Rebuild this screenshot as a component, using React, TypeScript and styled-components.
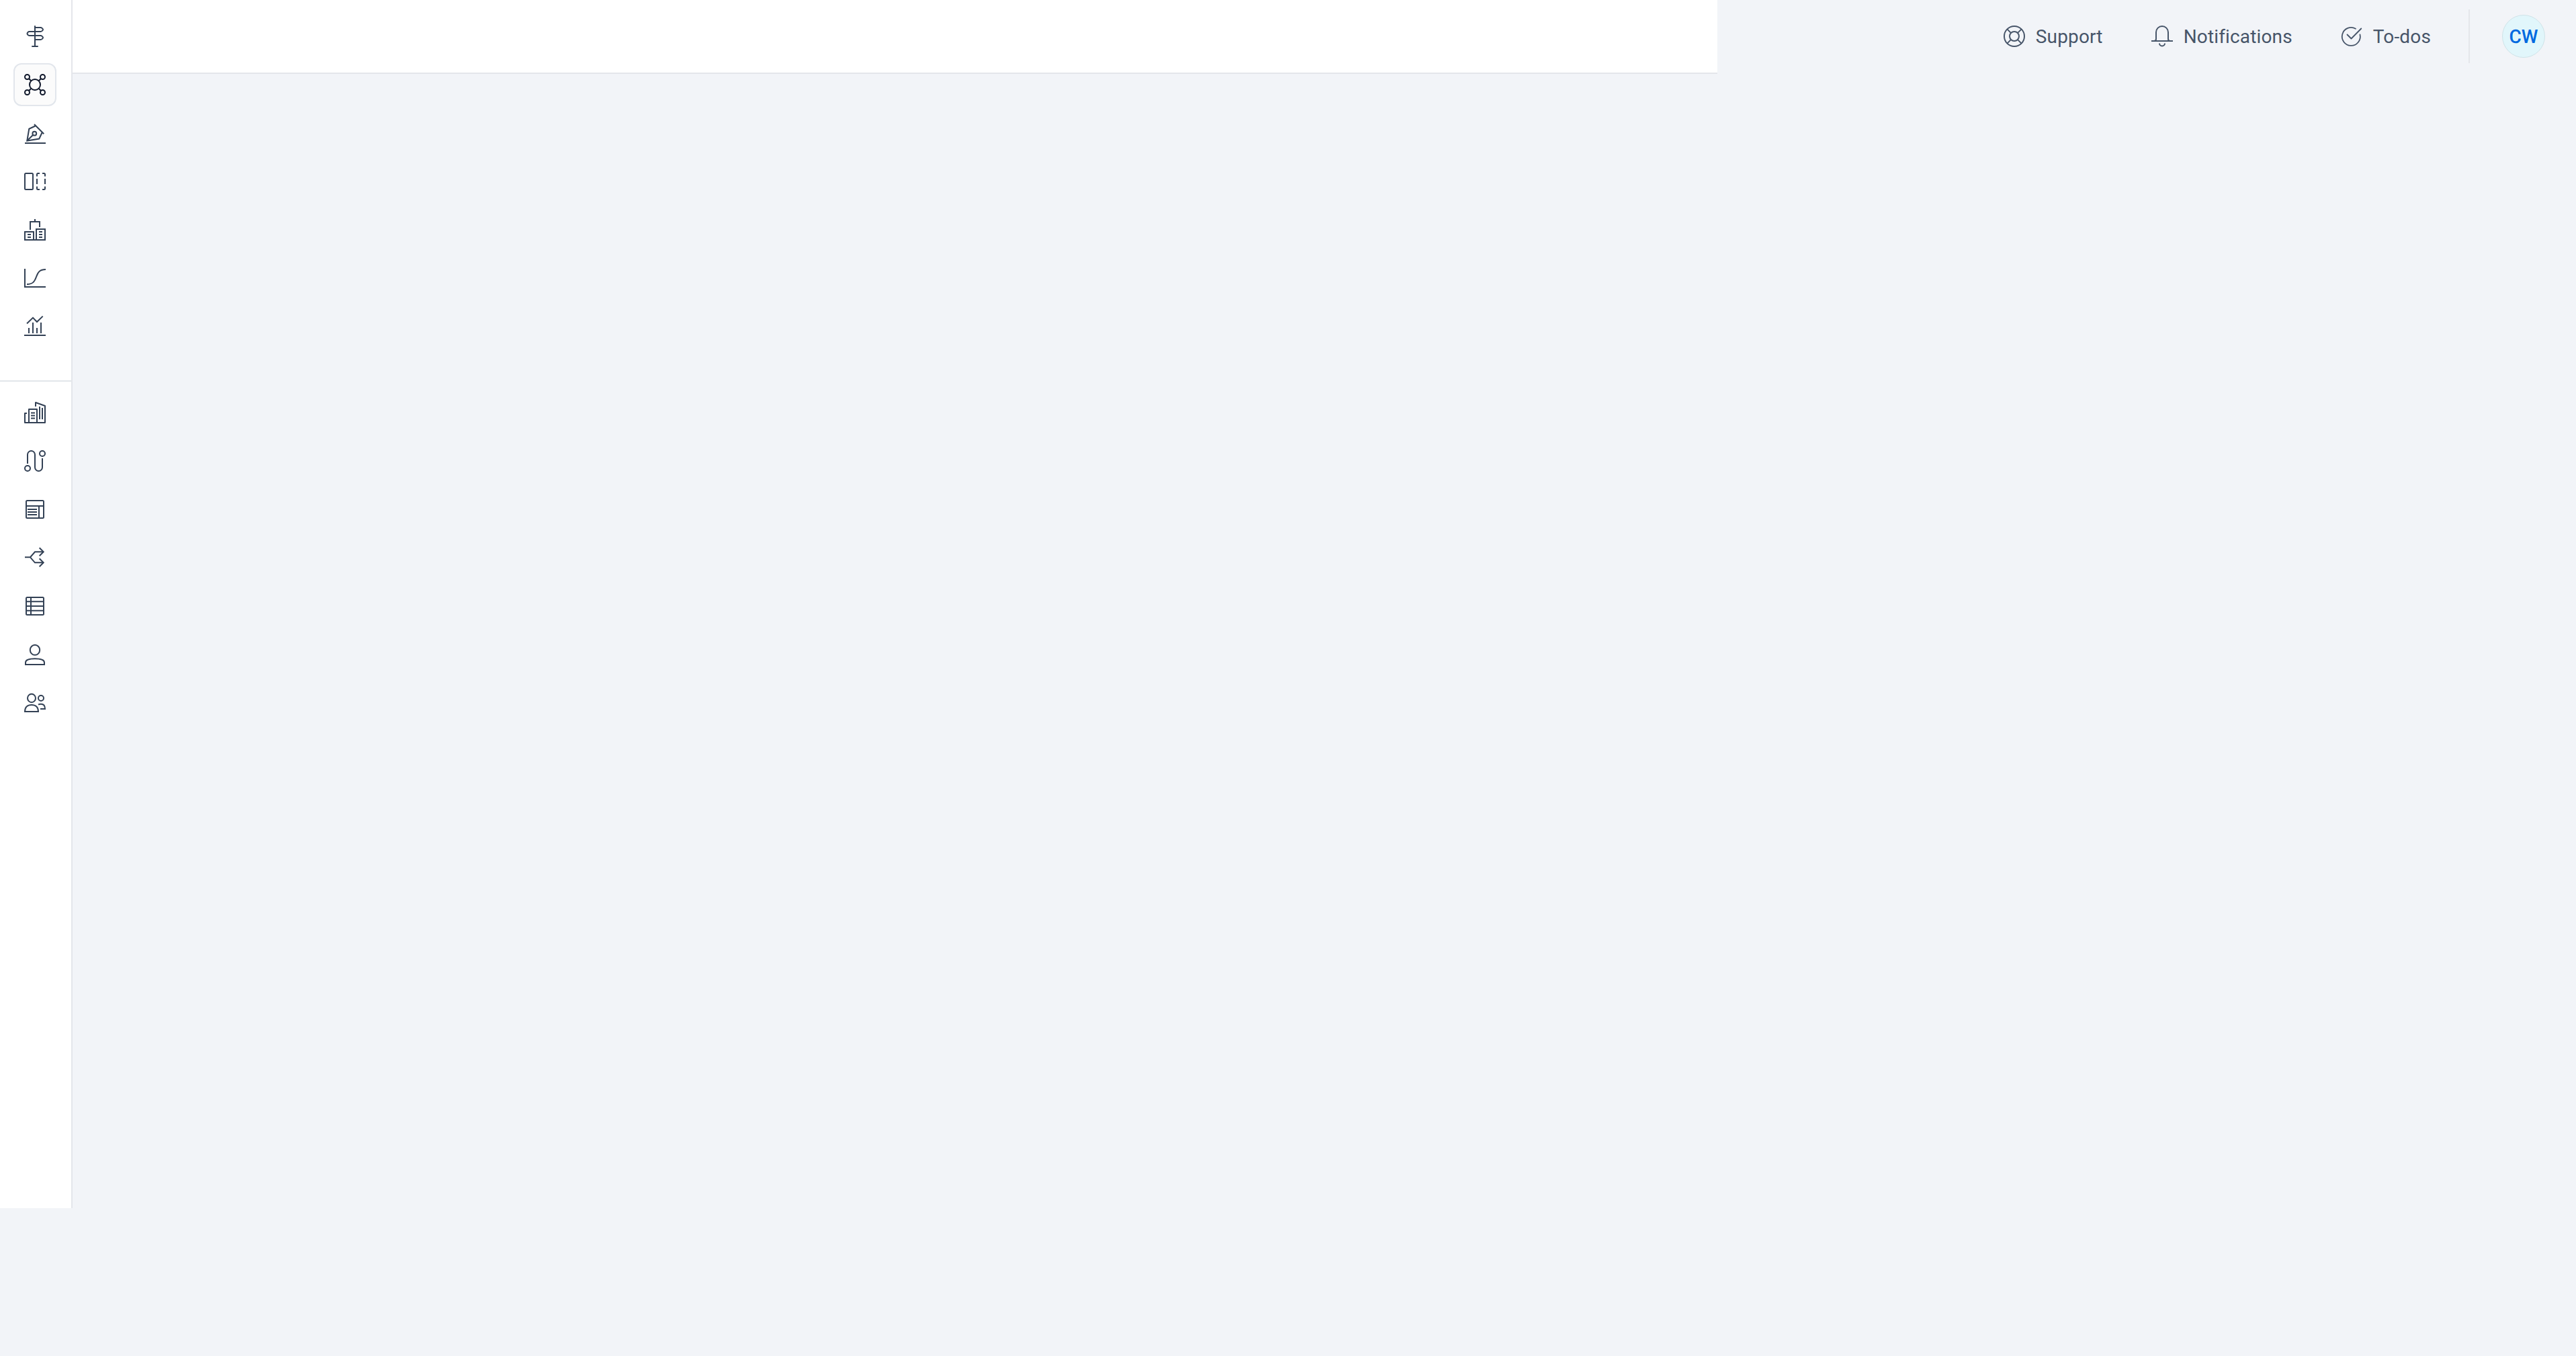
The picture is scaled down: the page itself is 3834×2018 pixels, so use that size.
import React, { ReactNode } from 'react'
import styled, { createGlobalStyle } from 'styled-components'

const GlobalStyle = createGlobalStyle`
  *, *::before, *::after {
    box-sizing: border-box;
  }
  body {
    margin: 0;
    background-color: #f2f4f8;
    font-family: Roboto, 'Liberation Sans', sans-serif;
    text-rendering: geometricPrecision;
  }
`

const Layout = styled.div`
  display: flex;
  align-items: flex-start;
  min-height: 2018px;
`

const Sidebar = styled.nav`
  width: 108px;
  height: 1798px;
  flex-shrink: 0;
  background-color: #fff;
  border-right: 2px solid #e4e6eb;
`

const NavGroup = styled.div<{ $last?: boolean }>`
  display: flex;
  flex-direction: column;
  gap: 8px;
  padding: ${props => (props.$last ? '14px 20px 0' : '22px 20px 48px')};
  border-bottom: ${props => (props.$last ? '0' : '2px solid #e2e6ea')};
`

const NavButton = styled.button<{ $active?: boolean }>`
  display: flex;
  align-items: center;
  justify-content: center;
  width: 64px;
  height: 64px;
  padding: 0;
  border: 2px solid ${props => (props.$active ? '#e2e6ec' : 'transparent')};
  border-radius: 12px;
  background-color: ${props => (props.$active ? '#fbfbfb' : 'transparent')};
  color: ${props => (props.$active ? '#0f172a' : '#334155')};
`

const Header = styled.header`
  display: flex;
  flex: 1;
  height: 110px;
`

const TitleBar = styled.div`
  width: 2448px;
  background-color: #fff;
  border-bottom: 2px solid #e4e6eb;
`

const Actions = styled.div`
  display: flex;
  flex: 1;
  align-items: center;
  justify-content: flex-end;
  height: 108px;
  padding-right: 46px;
`

const ActionList = styled.div`
  display: flex;
  gap: 72px;
  padding-right: 56px;
`

const Action = styled.button`
  display: flex;
  align-items: center;
  gap: 16px;
  padding: 0;
  border: 0;
  background: none;
  color: #475569;
  font-family: inherit;
`

const Label = styled.span`
  padding-top: 1px;
  font-size: 28px;
  line-height: 40px;
  letter-spacing: 0.15px;
`

const Divider = styled.div`
  width: 2px;
  height: 80px;
  margin-right: 48px;
  background-color: #e4e6eb;
`

const Avatar = styled.div`
  display: flex;
  align-items: center;
  justify-content: center;
  width: 64px;
  height: 64px;
  padding-top: 1px;
  border: 1px solid #cfe3e8;
  border-radius: 50%;
  background-color: #e1f6fb;
  color: #0069e0;
  font-size: 28px;
  font-weight: 500;
`

const Svg = styled.svg`
  display: block;
  width: 32px;
  height: 32px;
  fill: none;
  stroke: currentColor;
  overflow: visible;
`

const Icon = ({
  children,
  strokeWidth = 2
}: {
  children: ReactNode
  strokeWidth?: number
}): JSX.Element => (
  <Svg viewBox="0 0 32 32" strokeWidth={strokeWidth}>
    {children}
  </Svg>
)

type NavItem = {
  readonly name: string
  readonly icon: ReactNode
  readonly active?: boolean
}

const primaryItems: NavItem[] = [
  {
    name: 'Guide',
    icon: (
      <g strokeLinecap="round" strokeLinejoin="round">
        <path d="M16 1V31M12 31h8" />
        <path d="M16 3h8.500C26 3 28 5 28 6S26 9 24.500 9H7.500C6 9 4.500 11 4.500 12s1.500 3 3 3H24.500C26 15 28 17 28 18s-2 3-3.500 3H16" />
      </g>
    )
  },
  {
    name: 'Network',
    active: true,
    icon: (
      <>
        <circle cx="16" cy="16" r="8" />
        <circle cx="4.500" cy="4.500" r="3.500" />
        <circle cx="27.500" cy="4.500" r="3.500" />
        <circle cx="4.500" cy="27.500" r="3.500" />
        <circle cx="27.500" cy="27.500" r="3.500" />
        <path d="M7 7l3.300 3.300M25 7l-3.300 3.300M7 25l3.300-3.300M25 25l-3.300-3.300" />
      </>
    )
  },
  {
    name: 'Design',
    icon: (
      <>
        <path d="M1 31h31M15 3l14.300 14.200" />
        <path d="M16.500 5.500L7.300 9.800L4.300 27.500L22.300 24.500L26.500 15.500" />
        <circle cx="15.300" cy="16.700" r="2.900" />
        <path d="M13.200 18.800L4.300 27.500" />
      </>
    )
  },
  {
    name: 'Compare',
    icon: (
      <>
        <rect x="1" y="4" width="12" height="24" rx="1.500" />
        <path d="M19 8.500V5.500Q19 4 20.500 4H23M27 4h2.500Q31 4 31 5.500V8.500M31 23.500v3Q31 28 29.500 28H27M23 28h-2.500Q19 28 19 26.500V23.500M19 12v8M31 12v8" />
      </>
    )
  },
  {
    name: 'Organization',
    icon: (
      <>
        <path d="M16 0v4M9 16V4h14v8" />
        <path d="M1 31V19h13v12M18 31V15h13v16M0 31h32" />
        <path d="M5 23h5M5 27h5M22 19h5M22 23h5M22 27h5" />
      </>
    )
  },
  {
    name: 'Curve',
    icon: (
      <>
        <path d="M1 2v27h31" />
        <path d="M4 25C13 25 15.500 21 18 14C20.500 7 23 3 32 3" />
      </>
    )
  },
  {
    name: 'Analytics',
    icon: (
      <>
        <path d="M0 29h32M7 18v8M13 10v16M19 18v8M25 10v16" />
        <path d="M4 11.500L13 2.800L19 9L27.700 0.600" />
      </>
    )
  }
]

const secondaryItems: NavItem[] = [
  {
    name: 'Companies',
    icon: (
      <g strokeLinejoin="round">
        <path d="M4 17H1v14h30V6L17 1v6" />
        <path d="M7 31V11h12v20" />
        <path d="M10 16.500h6M10 20.500h6M10 24.500h6M23 7v19M27 9v17" />
      </g>
    )
  },
  {
    name: 'Journeys',
    icon: (
      <>
        <circle cx="5" cy="27" r="4" />
        <circle cx="27" cy="5" r="4" />
        <path d="M5 20V6.500a5.500 5.500 0 0 1 11 0v19a5.500 5.500 0 0 0 11 0V12" />
      </>
    )
  },
  {
    name: 'Pages',
    icon: (
      <>
        <rect x="3" y="3" width="26" height="26" rx="1.500" />
        <path d="M3 11h26M22 11v18M5 16h14M5 20h14M5 24h14" />
      </>
    )
  },
  {
    name: 'Branches',
    icon: (
      <>
        <path d="M1 15.300h8M29 7.300H16L9 15.300L16 23.300H29" />
        <path d="M22.700 1.300l6 6l-6 6M22.700 17.300l6 6l-6 6" />
      </>
    )
  },
  {
    name: 'Tables',
    icon: (
      <>
        <rect x="3" y="3" width="26" height="26" rx="1.500" />
        <path d="M3 9.300h26M3 16h26M3 22.700h26M10 3v26" />
      </>
    )
  },
  {
    name: 'Person',
    icon: (
      <>
        <ellipse cx="16" cy="9.300" rx="7.200" ry="7.500" />
        <path d="M2 31v-3C2 24 8 22.300 16 22.300S30 24 30 28v3z" />
      </>
    )
  },
  {
    name: 'People',
    icon: (
      <>
        <ellipse cx="11" cy="9" rx="6" ry="6.200" />
        <circle cx="25" cy="9" r="4" />
        <path d="M1 29C1 22.500 5 19 11 19s10 3.500 10 10z" />
        <path d="M21 18.700C22.500 17.700 24 17.700 25 17.700C29 17.700 31 20 31 25H24" />
      </>
    )
  }
]

const NavList = ({ items }: { items: NavItem[] }): JSX.Element => (
  <>
    {items.map(({ name, icon, active }) => (
      <NavButton key={name} aria-label={name} $active={active}>
        <Icon>{icon}</Icon>
      </NavButton>
    ))}
  </>
)

const App = (): JSX.Element => (
  <>
    <GlobalStyle />
    <Layout>
      <Sidebar>
        <NavGroup>
          <NavList items={primaryItems} />
        </NavGroup>
        <NavGroup $last>
          <NavList items={secondaryItems} />
        </NavGroup>
      </Sidebar>
      <Header>
        <TitleBar />
        <Actions>
          <ActionList>
            <Action>
              <Icon>
                <circle cx="16" cy="16" r="15" />
                <circle cx="16" cy="16" r="7" />
                <path d="M5.400 5.400l5.700 5.700M26.600 5.400l-5.700 5.700M5.400 26.600l5.700-5.700M26.600 26.600l-5.700-5.700" />
              </Icon>
              <Label>Support</Label>
            </Action>
            <Action>
              <Icon>
                <path d="M0 23h32" />
                <path d="M4 23Q7 23 7 20V10a9 9 0 0 1 18 0v10q0 3 3 3" />
                <path d="M12 26.500a4 4 0 0 0 8 0" />
              </Icon>
              <Label>Notifications</Label>
            </Action>
            <Action>
              <Icon strokeWidth={1.8}>
                <g strokeLinecap="round" strokeLinejoin="round">
                  <path d="M22 4.700A13.500 13.500 0 1 0 28.500 13.500" />
                  <path d="M9.500 13.500L15.500 19.500L30.300 4.500" />
                </g>
              </Icon>
              <Label>To-dos</Label>
            </Action>
          </ActionList>
          <Divider />
          <Avatar>CW</Avatar>
        </Actions>
      </Header>
    </Layout>
  </>
)

export default App
